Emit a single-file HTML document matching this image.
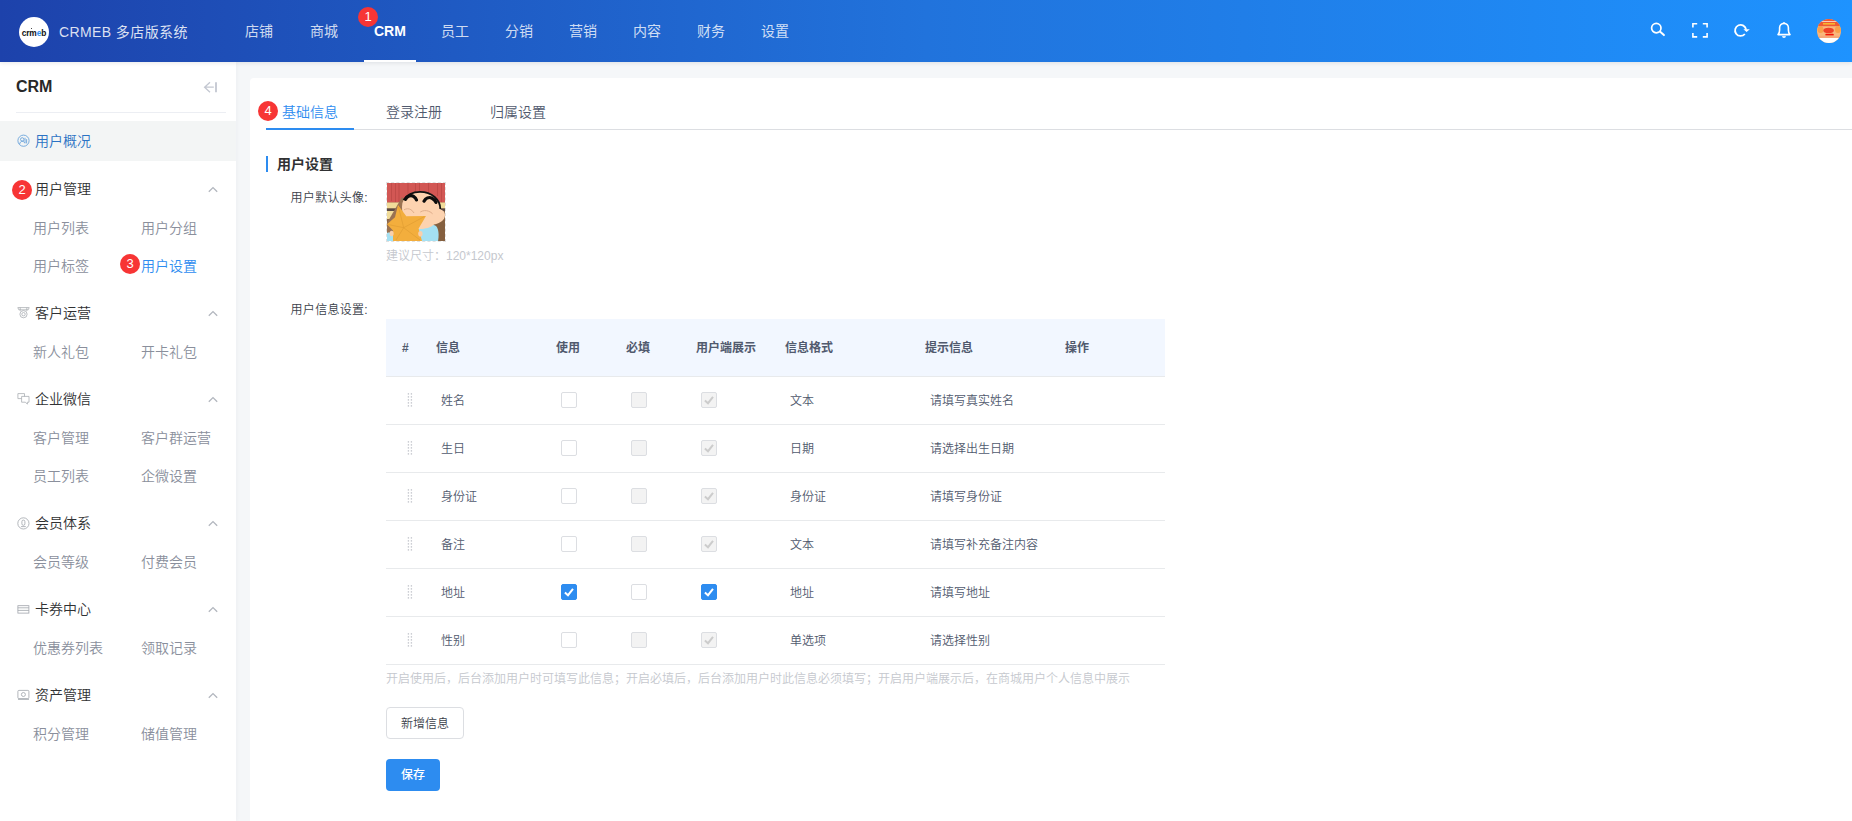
<!DOCTYPE html>
<html lang="zh-CN">
<head>
<meta charset="utf-8">
<title>CRMEB 多店版系统</title>
<style>
*{box-sizing:border-box;margin:0;padding:0}
html,body{width:1852px;height:821px;overflow:hidden;background:#f5f7f9;}
body{font-family:"Liberation Sans","Noto Sans CJK SC",sans-serif;font-size:14px;font-weight:350;color:#515a6e;position:relative;-webkit-font-smoothing:antialiased}
.abs{position:absolute;white-space:nowrap}
/* header */
#hd{position:absolute;left:0;top:0;width:1852px;height:62px;z-index:5;box-shadow:0 1px 4px rgba(0,21,41,.1);background:linear-gradient(90deg,#1d42ab 0%,#2173dc 50%,#1e93ff 100%);}
#logo{position:absolute;left:19px;top:17px;width:30px;height:30px;border-radius:50%;background:#fff;color:#111;font-size:8.400px;font-weight:bold;line-height:32px;text-align:center;letter-spacing:-.1px}
#logo b{position:absolute;left:11.700px;top:10.700px;width:1.600px;height:1.600px;border-radius:50%;background:#111}
#logo i{font-style:normal;color:#2d8cf0}
#brand{position:absolute;left:59px;top:22px;font-weight:400;font-size:14px;line-height:20px;color:rgba(255,255,255,.85);letter-spacing:.4px}
.nav{position:absolute;top:21px;font-size:14px;font-weight:400;line-height:20px;color:rgba(255,255,255,.8)}
.nav.on{color:#fff;font-weight:bold}
#navline{position:absolute;left:364px;top:60px;width:52px;height:2px;background:#fff}
.badge{position:absolute;width:20px;height:20px;border-radius:50%;background:#f73535;color:#fff;font-size:13px;line-height:20px;text-align:center}
/* sidebar */
#sb{position:absolute;left:0;top:62px;width:236px;height:759px;background:#fff;box-shadow:1px 0 4px rgba(0,21,41,.04)}
#sbt{position:absolute;left:16px;top:77px;font-size:16px;font-weight:bold;line-height:20px;color:#282828}
#sbline{position:absolute;left:16px;top:112px;width:210px;height:1px;background:#eceef3}
#sel{position:absolute;left:0;top:121px;width:236px;height:40px;background:#f3f5f5}
.g{position:absolute;left:35px;font-size:14px;line-height:20px;color:#303133}
.s{position:absolute;font-size:14px;line-height:20px;color:#8a8f9c}
.s.on{color:#2d8cf0}
.chev{position:absolute;left:207px;width:10px;height:10px}
/* main */
#card{position:absolute;left:250px;top:78px;width:1620px;height:760px;background:#fff;border-radius:4px}

.tab{position:absolute;top:102px;font-size:14px;line-height:20px;color:#515a6e}
.tab.on{color:#2d8cf0}
#tabline{position:absolute;left:266px;top:129px;width:1586px;height:1px;background:#dcdee2}
#tabink{position:absolute;left:266px;top:128px;width:88px;height:2px;background:#2d8cf0}
#secbar{position:absolute;left:266px;top:156px;width:2px;height:16px;background:#2d8cf0}
#sect{position:absolute;left:277px;top:154px;font-size:14px;font-weight:bold;line-height:20px;color:#303133}
.lab{position:absolute;width:120px;left:248px;text-align:right;font-size:12px;line-height:18px;color:#3b3f4a;letter-spacing:.3px}
#ava{position:absolute;left:386px;top:182px;width:60px;height:60px;border:1px dashed #e0e0e0;overflow:hidden}
.hint{position:absolute;left:386px;font-size:12px;line-height:18px;color:#c5c8ce}
#th{position:absolute;left:386px;top:319px;width:779px;height:57px;background:#f2f7ff}
.hl{position:absolute;left:386px;width:779px;height:1px;background:#e8eaec}
.h{position:absolute;top:339px;font-size:12px;font-weight:bold;line-height:18px;color:#515a6e}
.c{position:absolute;margin-top:1px;font-size:12px;line-height:18px;color:#515a6e}
.cb{position:absolute;width:16px;height:16px;border:1px solid #dcdee2;border-radius:2px;background:#fff}
.cb.dis{background:#f3f3f3}
.cb.chk{background:#2d8cf0;border-color:#2d8cf0}
.cb svg{position:absolute;left:-1px;top:-1px;width:16px;height:16px}
.cb.dchk{background:#f3f3f3}
.drag{position:absolute;left:407px;width:6px;height:14px}
#btn1{position:absolute;left:386px;top:707px;width:78px;height:32px;border:1px solid #dcdee2;border-radius:4px;background:#fff;font-size:12px;line-height:32px;text-align:center;color:#3b3f4a}
#btn2{position:absolute;left:386px;top:759px;width:54px;height:32px;border-radius:4px;background:#2d8cf0;font-size:12px;line-height:32px;text-align:center;color:#fff;font-weight:500}
</style>
</head>
<body>
<div id="hd">
  <div id="logo">crm<i>e</i>b<b></b></div>
  <div id="brand">CRMEB 多店版系统</div>
  <div class="nav" style="left:245px">店铺</div>
  <div class="nav" style="left:310px">商城</div>
  <div class="nav on" style="left:374px">CRM</div>
  <div class="nav" style="left:441px">员工</div>
  <div class="nav" style="left:505px">分销</div>
  <div class="nav" style="left:569px">营销</div>
  <div class="nav" style="left:633px">内容</div>
  <div class="nav" style="left:697px">财务</div>
  <div class="nav" style="left:761px">设置</div>
  <div id="navline"></div>
  <div class="badge" style="left:358px;top:7px">1</div>

<svg class="abs" style="left:1648px;top:19px;width:20px;height:20px" viewBox="0 0 20 20" fill="none" stroke="#fff" stroke-width="1.7" stroke-linecap="round"><circle cx="8.3" cy="9.1" r="4.7"/><path d="M11.9 12.6 L15.9 16.1" stroke-width="2"/></svg>
<svg class="abs" style="left:1690px;top:20px;width:20px;height:20px" viewBox="0 0 20 20" fill="none" stroke="#fff" stroke-width="1.6"><path d="M2.9 7.6V3.7h4.3M12.8 3.7h4.3v3.9M17.1 13v3.9h-4.3M7.2 16.9H2.9V13"/></svg>
<svg class="abs" style="left:1730px;top:20px;width:22px;height:20px" viewBox="0 0 22 20" fill="none" stroke="#fff" stroke-width="1.6"><path d="M14.85 14 A5.55 5.55 0 1 1 16.1 9.6" stroke-width="1.8"/><path d="M13.4 9.3 H19.8 L16.6 12z" fill="#fff" stroke="none"/></svg>
<svg class="abs" style="left:1774px;top:20px;width:20px;height:20px" viewBox="0 0 20 20" fill="none" stroke="#fff" stroke-width="1.6" stroke-linejoin="round"><path d="M4 14.6c1.3-1 1.6-2.300 1.6-4.600V7.800a4.400 4.400 0 0 1 8.800 0V10c0 2.300.3 3.600 1.600 4.600z"/><path d="M8.600 16.200a1.500 1.500 0 0 0 2.800 0M10 2.200v1.200"/></svg>
<svg class="abs" style="left:1817px;top:19px;width:24px;height:24px" viewBox="0 0 24 24"><defs><clipPath id="av"><circle cx="12" cy="12" r="12"/></clipPath></defs><g clip-path="url(#av)"><rect width="24" height="24" fill="#f9b77c"/><rect width="24" height="7.2" fill="#ef5a34"/><rect x="4" y="2" width="16" height="1" fill="#f9c9b8"/><rect x="6" y="4" width="12" height="1.600" fill="#f8b62e"/><ellipse cx="3.500" cy="10.500" rx="3" ry="3.500" fill="#f9a04a"/><ellipse cx="21" cy="10.500" rx="3" ry="3.500" fill="#f9a04a"/><ellipse cx="11.600" cy="11.400" rx="5.200" ry="2.600" fill="#ee4128"/><rect x="8.300" y="14.800" width="8.500" height="1.800" rx=".9" fill="#f41208"/><rect y="16.800" width="24" height="2.400" fill="#f6a878"/><rect y="19" width="24" height="5" fill="#fff"/></g></svg>
</div>
<div id="sb"></div>
<div id="sbt">CRM</div>
<svg class="abs" style="left:202px;top:80px;width:18px;height:14px" viewBox="0 0 18 14" fill="none" stroke="#c3c7d1" stroke-width="1.3"><path d="M8 2.200L2.600 7.200L8 12.200M2.600 7.200H11.800"/><path d="M14 2.200v10" stroke-width="1.800"/></svg>
<div id="sbline"></div>
<div id="sel"></div>

<div class="g" style="top:131px;color:#2b72c4">用户概况</div>
<div class="g" style="top:179px">用户管理</div>
<div class="s" style="left:33px;top:218px">用户列表</div>
<div class="s" style="left:141px;top:218px">用户分组</div>
<div class="s" style="left:33px;top:256px">用户标签</div>
<div class="s on" style="left:141px;top:256px">用户设置</div>
<div class="g" style="top:303px">客户运营</div>
<div class="s" style="left:33px;top:342px">新人礼包</div>
<div class="s" style="left:141px;top:342px">开卡礼包</div>
<div class="g" style="top:389px">企业微信</div>
<div class="s" style="left:33px;top:428px">客户管理</div>
<div class="s" style="left:141px;top:428px">客户群运营</div>
<div class="s" style="left:33px;top:466px">员工列表</div>
<div class="s" style="left:141px;top:466px">企微设置</div>
<div class="g" style="top:513px">会员体系</div>
<div class="s" style="left:33px;top:552px">会员等级</div>
<div class="s" style="left:141px;top:552px">付费会员</div>
<div class="g" style="top:599px">卡券中心</div>
<div class="s" style="left:33px;top:638px">优惠券列表</div>
<div class="s" style="left:141px;top:638px">领取记录</div>
<div class="g" style="top:685px">资产管理</div>
<div class="s" style="left:33px;top:724px">积分管理</div>
<div class="s" style="left:141px;top:724px">储值管理</div>
<div class="badge" style="left:12px;top:180px">2</div>
<div class="badge" style="left:120px;top:254px">3</div>
<svg class="chev" style="left:207px;top:183px;width:12px;height:12px" viewBox="0 0 12 12"><path d="M1.8 8.8 L6 4.6 L10.2 8.8" fill="none" stroke="#b2b6be" stroke-width="1.3"/></svg>
<svg class="chev" style="left:207px;top:307px;width:12px;height:12px" viewBox="0 0 12 12"><path d="M1.8 8.8 L6 4.6 L10.2 8.8" fill="none" stroke="#b2b6be" stroke-width="1.3"/></svg>
<svg class="chev" style="left:207px;top:393px;width:12px;height:12px" viewBox="0 0 12 12"><path d="M1.8 8.8 L6 4.6 L10.2 8.8" fill="none" stroke="#b2b6be" stroke-width="1.3"/></svg>
<svg class="chev" style="left:207px;top:517px;width:12px;height:12px" viewBox="0 0 12 12"><path d="M1.8 8.8 L6 4.6 L10.2 8.8" fill="none" stroke="#b2b6be" stroke-width="1.3"/></svg>
<svg class="chev" style="left:207px;top:603px;width:12px;height:12px" viewBox="0 0 12 12"><path d="M1.8 8.8 L6 4.6 L10.2 8.8" fill="none" stroke="#b2b6be" stroke-width="1.3"/></svg>
<svg class="chev" style="left:207px;top:689px;width:12px;height:12px" viewBox="0 0 12 12"><path d="M1.8 8.8 L6 4.6 L10.2 8.8" fill="none" stroke="#b2b6be" stroke-width="1.3"/></svg>

<svg class="abs" style="left:17px;top:134px;width:13px;height:13px" viewBox="0 0 13 13" fill="none" stroke="#5b9ad8" stroke-width=".8"><circle cx="6.5" cy="6.7" r="5.6"/><circle cx="5.2" cy="5.4" r="1.7"/><path d="M2.6 10.2c.3-2 1.4-2.9 2.6-2.9s2 .6 2.4 1.6M8 3.8v5.6M9.6 5.2v4.2"/></svg>
<svg class="abs" style="left:17px;top:306px;width:13px;height:13px" viewBox="0 0 13 13" fill="none" stroke="#a9adb3" stroke-width=".8"><path d="M.8 1.6h11.4M3.2 1.6v3.2M9.8 1.6v3.2M.8 1.6l1 2.2h9.4l1-2.2"/><circle cx="6.5" cy="8.2" r="3.6"/><circle cx="6.5" cy="8.2" r="1.7"/></svg>
<svg class="abs" style="left:17px;top:392px;width:13px;height:13px" viewBox="0 0 13 13" fill="none" stroke="#a9adb3" stroke-width=".8"><path d="M.9 1.6h6.6v5H.9z"/><path d="M4.6 4.4h7.4v5.8H10.4v2l-2-2H4.6z" fill="#fff"/></svg>
<svg class="abs" style="left:17px;top:517px;width:13px;height:13px" viewBox="0 0 13 13" fill="none" stroke="#a0a4ab" stroke-width=".8"><circle cx="6.4" cy="6.4" r="5.6"/><path d="M4.9 4.6a1.5 1.5 0 0 1 3 0v2.2a1.5 1.5 0 0 1-3 0zM4 9.6h4.8"/></svg>
<svg class="abs" style="left:17px;top:604px;width:13px;height:11px" viewBox="0 0 13 11" fill="none" stroke="#a0a4ab" stroke-width=".8"><rect x=".9" y="1.700" width="11" height="7.400" /><path d="M.9 3.800h11M.9 6.400h11"/></svg>
<svg class="abs" style="left:17px;top:689px;width:13px;height:11px" viewBox="0 0 13 11" fill="none" stroke="#a0a4ab" stroke-width=".8"><rect x=".9" y="1.4" width="11" height="8.2" rx="1"/><circle cx="6.4" cy="5.5" r="2"/><path d="M1 10.4h11" /></svg>
<div id="card"></div>
<div id="tabline"></div><div id="tabink"></div>
<div class="tab on" style="left:282px">基础信息</div>
<div class="tab" style="left:386px">登录注册</div>
<div class="tab" style="left:490px">归属设置</div>
<div class="badge" style="left:258px;top:101px">4</div>
<div id="secbar"></div><div id="sect">用户设置</div>
<div class="lab" style="top:189px">用户默认头像:</div>
<div id="ava"><svg viewBox="0 0 58 58" width="58" height="58" style="display:block">
<rect width="58" height="58" fill="#8a6446"/>
<rect width="58" height="19.5" fill="#d25754"/>
<path d="M4.500 0v18M8.500 0v19M12 0v19M21 0v12M28.500 0v9M32.500 0v8M41.500 0v9M50.500 0v13M54.500 0v19" stroke="#b94644" stroke-width=".7" fill="none"/>
<rect y="19.500" width="58" height="6" fill="#f1dc9a"/>
<rect y="25.500" width="58" height="2.500" fill="#5b4a44"/>
<rect y="28" width="16" height="8" fill="#f1dc9a"/>
<path d="M15 14 L0 40 V58 H10 L20 20z" fill="#9a7252"/>
<path d="M49 28h9v30H44z" fill="#85603f"/>
<path d="M31 44c4-3 14-4 18-1 3 3 3 10 2 15H30z" fill="#a4e0f2"/>
<path d="M0 50c3-1 6 0 8 2l2 6H0z" fill="#a4e0f2"/>
<path d="M15 24C15 14 24 8.600 33 8.600c12 0 20.500 8 20.500 18 2.500.6 4.500 2.400 4.500 5.400 0 5-5 8.500-11 9.500-3 3-9 4.500-14 4.500C22 46 15 36 15 24z" fill="#fdd3b0"/>
<path d="M16.500 17C20 11.500 26 8.800 33 8.800c12 0 20.300 8 20.300 17.200" fill="none" stroke="#111" stroke-width="1.800"/>
<path d="M18.500 16.300c1.500-3.400 5.500-4.600 8-3 1.600 1 2.600 2.400 3 3.600" fill="none" stroke="#0c0c0c" stroke-width="3.200" stroke-linecap="round"/>
<path d="M37 18.200c1.600-3 5-4.400 8-3 2 1 3.400 2.600 4 4.200" fill="none" stroke="#0c0c0c" stroke-width="3.200" stroke-linecap="round"/>
<path d="M17 26.800c2.500-1.400 5-1.400 7 0 1.400 1 2.400 2 3 3.200M33.300 29c2.600-1.600 5.600-1.800 8.200-.8 1.800.6 3.200 1.600 4.100 2.600" fill="none" stroke="#dba987" stroke-width=".9"/>
<path d="M11 22 L19.300 33.300 L39 32.900 L31.600 45.600 L35 58 H6 L6 47.400 L0 41.200 L8 34.200z" fill="#f3ae3d"/>
<path d="M16.700 44.700L11.500 24M16.700 44.700L37.500 33.500M16.700 44.700L33 57M16.700 44.700L9 57M16.700 44.700L1 41.500" stroke="#dd9a30" stroke-width=".6" fill="none"/>
<ellipse cx="4.600" cy="50.500" rx="2" ry="2.800" fill="#f9cfac"/>
<ellipse cx="33.400" cy="50.800" rx="2.200" ry="2.800" fill="#f9cfac"/>
</svg></div>
<div class="hint" style="top:247px">建议尺寸：120*120px</div>
<div class="lab" style="top:301px">用户信息设置:</div>
<div id="th"></div>
<div class="h" style="left:402px">#</div>
<div class="h" style="left:436px">信息</div>
<div class="h" style="left:556px">使用</div>
<div class="h" style="left:626px">必填</div>
<div class="h" style="left:696px">用户端展示</div>
<div class="h" style="left:785px">信息格式</div>
<div class="h" style="left:925px">提示信息</div>
<div class="h" style="left:1065px">操作</div>
<div class="hl" style="top:376px"></div>
<svg class="drag" style="top:393px" viewBox="0 0 6 14" fill="#c8cad0"><circle cx="1.4" cy="0.9" r=".8"/><circle cx="4.4" cy="0.9" r=".8"/><circle cx="1.4" cy="3.9" r=".8"/><circle cx="4.4" cy="3.9" r=".8"/><circle cx="1.4" cy="6.9" r=".8"/><circle cx="4.4" cy="6.9" r=".8"/><circle cx="1.4" cy="9.9" r=".8"/><circle cx="4.4" cy="9.9" r=".8"/><circle cx="1.4" cy="12.9" r=".8"/><circle cx="4.4" cy="12.9" r=".8"/></svg><div class="c" style="left:441px;top:391px">姓名</div><div class="cb" style="left:561px;top:392px"></div><div class="cb dis" style="left:631px;top:392px"></div><div class="cb dchk" style="left:701px;top:392px"><svg viewBox="0 0 16 16"><path d="M3.9 8.4 L7 11.2 L12 4.8" fill="none" stroke="#ccc" stroke-width="2"/></svg></div><div class="c" style="left:790px;top:391px">文本</div><div class="c" style="left:930px;top:391px">请填写真实姓名</div><div class="hl" style="top:424px"></div>
<svg class="drag" style="top:441px" viewBox="0 0 6 14" fill="#c8cad0"><circle cx="1.4" cy="0.9" r=".8"/><circle cx="4.4" cy="0.9" r=".8"/><circle cx="1.4" cy="3.9" r=".8"/><circle cx="4.4" cy="3.9" r=".8"/><circle cx="1.4" cy="6.9" r=".8"/><circle cx="4.4" cy="6.9" r=".8"/><circle cx="1.4" cy="9.9" r=".8"/><circle cx="4.4" cy="9.9" r=".8"/><circle cx="1.4" cy="12.9" r=".8"/><circle cx="4.4" cy="12.9" r=".8"/></svg><div class="c" style="left:441px;top:439px">生日</div><div class="cb" style="left:561px;top:440px"></div><div class="cb dis" style="left:631px;top:440px"></div><div class="cb dchk" style="left:701px;top:440px"><svg viewBox="0 0 16 16"><path d="M3.9 8.4 L7 11.2 L12 4.8" fill="none" stroke="#ccc" stroke-width="2"/></svg></div><div class="c" style="left:790px;top:439px">日期</div><div class="c" style="left:930px;top:439px">请选择出生日期</div><div class="hl" style="top:472px"></div>
<svg class="drag" style="top:489px" viewBox="0 0 6 14" fill="#c8cad0"><circle cx="1.4" cy="0.9" r=".8"/><circle cx="4.4" cy="0.9" r=".8"/><circle cx="1.4" cy="3.9" r=".8"/><circle cx="4.4" cy="3.9" r=".8"/><circle cx="1.4" cy="6.9" r=".8"/><circle cx="4.4" cy="6.9" r=".8"/><circle cx="1.4" cy="9.9" r=".8"/><circle cx="4.4" cy="9.9" r=".8"/><circle cx="1.4" cy="12.9" r=".8"/><circle cx="4.4" cy="12.9" r=".8"/></svg><div class="c" style="left:441px;top:487px">身份证</div><div class="cb" style="left:561px;top:488px"></div><div class="cb dis" style="left:631px;top:488px"></div><div class="cb dchk" style="left:701px;top:488px"><svg viewBox="0 0 16 16"><path d="M3.9 8.4 L7 11.2 L12 4.8" fill="none" stroke="#ccc" stroke-width="2"/></svg></div><div class="c" style="left:790px;top:487px">身份证</div><div class="c" style="left:930px;top:487px">请填写身份证</div><div class="hl" style="top:520px"></div>
<svg class="drag" style="top:537px" viewBox="0 0 6 14" fill="#c8cad0"><circle cx="1.4" cy="0.9" r=".8"/><circle cx="4.4" cy="0.9" r=".8"/><circle cx="1.4" cy="3.9" r=".8"/><circle cx="4.4" cy="3.9" r=".8"/><circle cx="1.4" cy="6.9" r=".8"/><circle cx="4.4" cy="6.9" r=".8"/><circle cx="1.4" cy="9.9" r=".8"/><circle cx="4.4" cy="9.9" r=".8"/><circle cx="1.4" cy="12.9" r=".8"/><circle cx="4.4" cy="12.9" r=".8"/></svg><div class="c" style="left:441px;top:535px">备注</div><div class="cb" style="left:561px;top:536px"></div><div class="cb dis" style="left:631px;top:536px"></div><div class="cb dchk" style="left:701px;top:536px"><svg viewBox="0 0 16 16"><path d="M3.9 8.4 L7 11.2 L12 4.8" fill="none" stroke="#ccc" stroke-width="2"/></svg></div><div class="c" style="left:790px;top:535px">文本</div><div class="c" style="left:930px;top:535px">请填写补充备注内容</div><div class="hl" style="top:568px"></div>
<svg class="drag" style="top:585px" viewBox="0 0 6 14" fill="#c8cad0"><circle cx="1.4" cy="0.9" r=".8"/><circle cx="4.4" cy="0.9" r=".8"/><circle cx="1.4" cy="3.9" r=".8"/><circle cx="4.4" cy="3.9" r=".8"/><circle cx="1.4" cy="6.9" r=".8"/><circle cx="4.4" cy="6.9" r=".8"/><circle cx="1.4" cy="9.9" r=".8"/><circle cx="4.4" cy="9.9" r=".8"/><circle cx="1.4" cy="12.9" r=".8"/><circle cx="4.4" cy="12.9" r=".8"/></svg><div class="c" style="left:441px;top:583px">地址</div><div class="cb chk" style="left:561px;top:584px"><svg viewBox="0 0 16 16"><path d="M3.9 8.4 L7 11.2 L12 4.8" fill="none" stroke="#fff" stroke-width="2"/></svg></div><div class="cb" style="left:631px;top:584px"></div><div class="cb chk" style="left:701px;top:584px"><svg viewBox="0 0 16 16"><path d="M3.9 8.4 L7 11.2 L12 4.8" fill="none" stroke="#fff" stroke-width="2"/></svg></div><div class="c" style="left:790px;top:583px">地址</div><div class="c" style="left:930px;top:583px">请填写地址</div><div class="hl" style="top:616px"></div>
<svg class="drag" style="top:633px" viewBox="0 0 6 14" fill="#c8cad0"><circle cx="1.4" cy="0.9" r=".8"/><circle cx="4.4" cy="0.9" r=".8"/><circle cx="1.4" cy="3.9" r=".8"/><circle cx="4.4" cy="3.9" r=".8"/><circle cx="1.4" cy="6.9" r=".8"/><circle cx="4.4" cy="6.9" r=".8"/><circle cx="1.4" cy="9.9" r=".8"/><circle cx="4.4" cy="9.9" r=".8"/><circle cx="1.4" cy="12.9" r=".8"/><circle cx="4.4" cy="12.9" r=".8"/></svg><div class="c" style="left:441px;top:631px">性别</div><div class="cb" style="left:561px;top:632px"></div><div class="cb dis" style="left:631px;top:632px"></div><div class="cb dchk" style="left:701px;top:632px"><svg viewBox="0 0 16 16"><path d="M3.9 8.4 L7 11.2 L12 4.8" fill="none" stroke="#ccc" stroke-width="2"/></svg></div><div class="c" style="left:790px;top:631px">单选项</div><div class="c" style="left:930px;top:631px">请选择性别</div><div class="hl" style="top:664px"></div>
<div class="hint" style="top:670px">开启使用后，后台添加用户时可填写此信息；开启必填后，后台添加用户时此信息必须填写；开启用户端展示后，在商城用户个人信息中展示</div>
<div id="btn1">新增信息</div>
<div id="btn2">保存</div>

</body>
</html>
